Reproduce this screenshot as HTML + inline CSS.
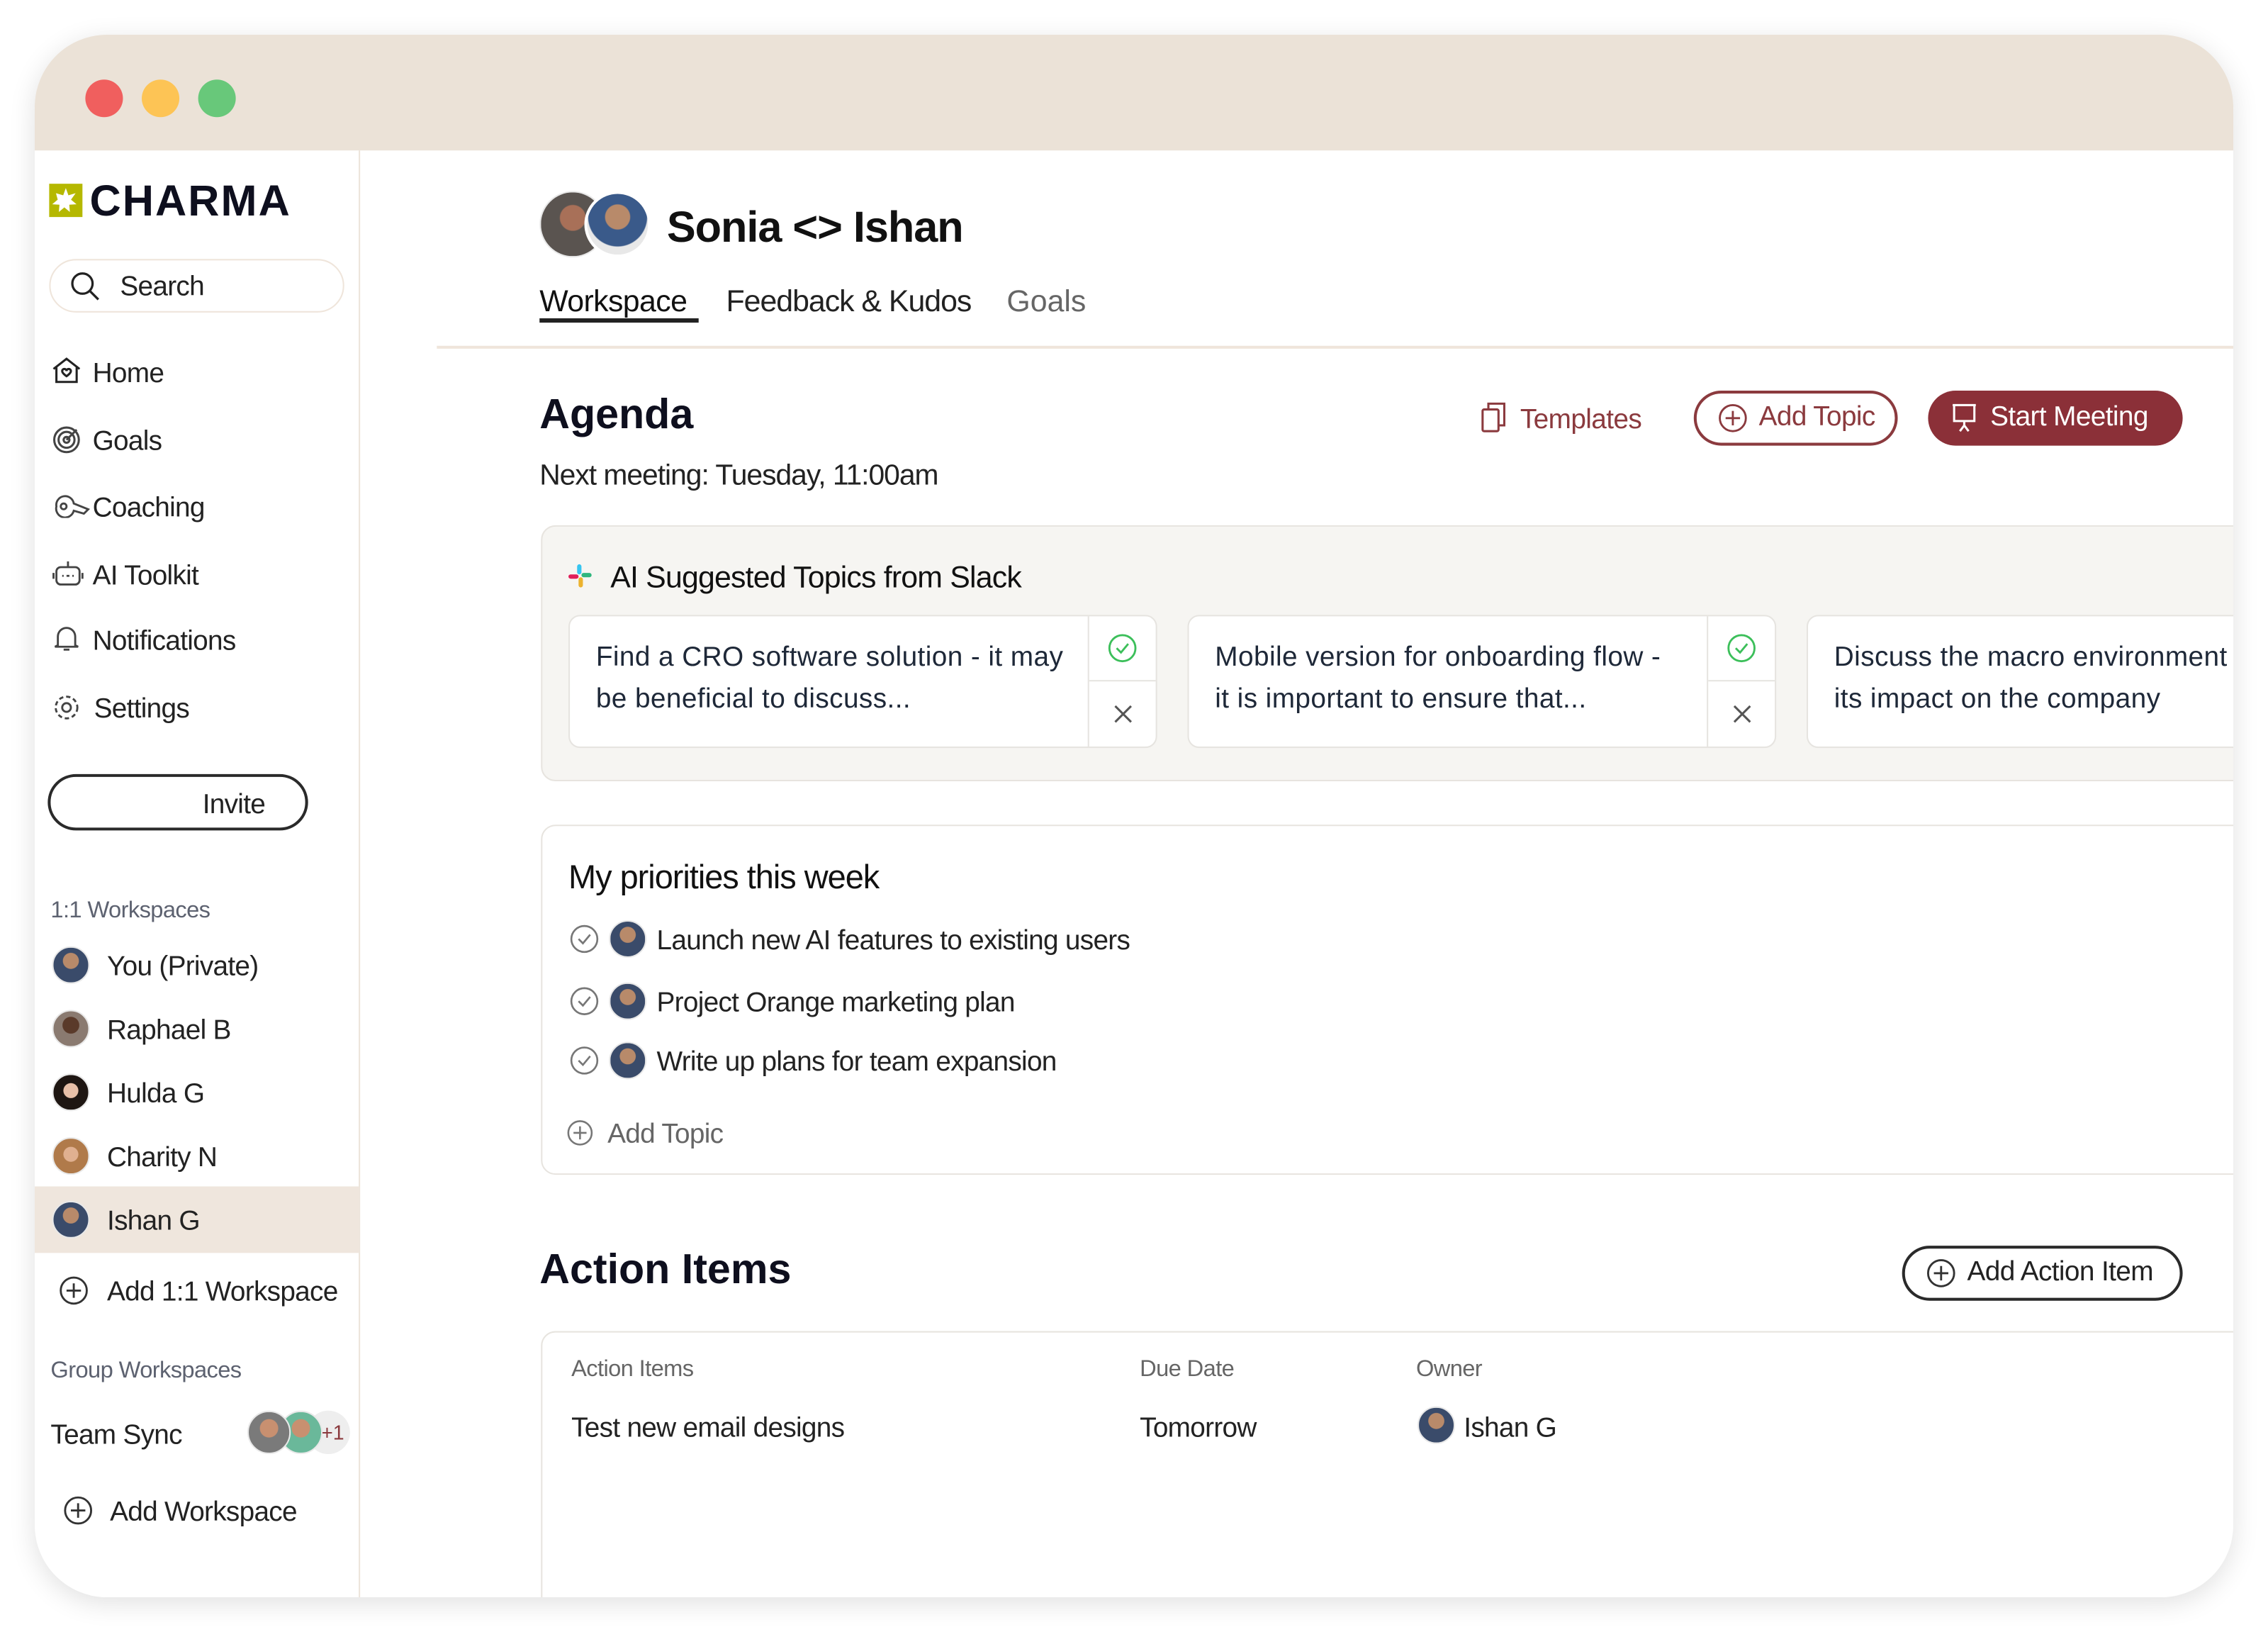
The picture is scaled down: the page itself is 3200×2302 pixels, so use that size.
<!DOCTYPE html>
<html><head><meta charset="utf-8"><style>
*{box-sizing:border-box;margin:0;padding:0}
html,body{width:3200px;height:2302px;overflow:hidden;background:#fff}
#stage{position:absolute;left:0;top:0;width:1568px;height:1128px;transform:scale(2.040816);transform-origin:0 0;font-family:"Liberation Sans",sans-serif;color:#1a1a24}
.win{position:absolute;left:24px;top:24px;width:1520px;height:1080px;border-radius:50px;overflow:hidden;background:#fff;box-shadow:0 4px 18px rgba(0,0,0,.12)}
.tb{position:absolute;left:0;top:0;width:100%;height:80px;background:#ebe2d7}
.dot{position:absolute;top:31px;width:26px;height:26px;border-radius:50%}
.side{position:absolute;left:0;top:80px;width:225px;height:1000px;border-right:1.5px solid #ece4da}
.a{position:absolute;white-space:nowrap}
.nav{font-size:19px;color:#222;letter-spacing:-.35px;margin-top:2px}
.av{position:absolute;width:26px;height:26px;border-radius:50%;background:radial-gradient(circle at 50% 38%,#b88a6a 0 28%,#3a4b6a 30% 100%);border:1.5px solid #e8e8e8}
.sec{font-size:16px;color:#5d6270;letter-spacing:-.3px;margin-top:2px}
.card{position:absolute;background:#fff;border:1.5px solid #e6e4e0;border-radius:8px}
.ct{position:absolute;left:18px;top:14px;font-size:19px;line-height:29px;color:#1e2838;letter-spacing:.2px}
.cd{position:absolute;top:0;width:47px;height:100%;border-left:1.5px solid #e6e4e0}
.btn{position:absolute;border-radius:20px;font-size:19px;display:flex;align-items:center;gap:8px;padding-left:15px;letter-spacing:-.3px}
</style></head><body><div id="stage">
<div class="win">
 <div class="tb"></div>
 <div class="dot" style="left:35px;background:#f05f5e"></div>
 <div class="dot" style="left:74px;background:#fdc455"></div>
 <div class="dot" style="left:113px;background:#68c87a"></div>
 <div class="side"></div>
 <div class="a" style="left:10px;top:103px;width:23px;height:23px;background:#b5b800"><svg width="23" height="23" viewBox="0 0 23 23"><path d="M11.5 3l1.8 5 5-1.5-3.2 4.5 3.8 3.2-5 .3.4 5-3.8-3.2-3.8 3.2.4-5-5-.3 3.8-3.2L4.7 6.5l5 1.5z" fill="#fff"/></svg></div>
 <div class="a" style="left:38px;top:99px;font-size:30px;font-weight:bold;letter-spacing:1px;color:#0e0f1e">CHARMA</div>
 <div class="a" style="left:10px;top:155px;width:204px;height:37px;border:1.5px solid #efe5db;border-radius:19px"></div>
 <svg class="a" style="left:24px;top:163px" width="22" height="22" viewBox="0 0 22 22" fill="none" stroke="#222" stroke-width="1.6"><circle cx="9" cy="9" r="7"/><path d="M14 14l6 6"/></svg>
 <div class="a nav" style="left:59px;top:162px">Search</div>
 <svg class="a" style="left:12px;top:223px" width="20" height="18" viewBox="0 0 20 18" fill="none" stroke="#222" stroke-width="1.5"><path d="M1 8L10 1l9 7M3 7v10h14V7M7 9.5c0-2 3-2 3 0 0-2 3-2 3 0 0 1.5-3 3.5-3 3.5S7 11 7 9.5z"/></svg>
 <div class="a nav" style="left:40px;top:222px">Home</div>
 <svg class="a" style="left:12px;top:270px" width="20" height="20" viewBox="0 0 20 20" fill="none" stroke="#444" stroke-width="1.5"><circle cx="10" cy="10" r="8.5"/><circle cx="10" cy="10" r="5.5"/><circle cx="10" cy="10" r="2"/><path d="M10 10l7-7"/></svg>
 <div class="a nav" style="left:40px;top:269px">Goals</div>
 <svg class="a" style="left:13px;top:318px" width="26" height="16" viewBox="0 0 26 16" fill="none" stroke="#444" stroke-width="1.4"><path d="M2 8a6 6 0 0 1 12-2l10 4-3 3-7-2a6 6 0 0 1-12-3z"/><circle cx="7" cy="8" r="2"/></svg>
 <div class="a nav" style="left:40px;top:315px">Coaching</div>
 <svg class="a" style="left:12px;top:362px" width="22" height="20" viewBox="0 0 22 20" fill="none" stroke="#444" stroke-width="1.4"><rect x="3" y="6" width="16" height="12" rx="3"/><path d="M11 6V2M1 10v4M21 10v4M7 12h1M10 12h2M14 12h1"/></svg>
 <div class="a nav" style="left:40px;top:362px">AI Toolkit</div>
 <svg class="a" style="left:13px;top:407px" width="18" height="20" viewBox="0 0 18 20" fill="none" stroke="#444" stroke-width="1.4"><path d="M3 15V9a6 6 0 0 1 12 0v6l2 1H1zM7 18h4"/></svg>
 <div class="a nav" style="left:40px;top:407px">Notifications</div>
 <svg class="a" style="left:12px;top:455px" width="20" height="20" viewBox="0 0 20 20" fill="none" stroke="#444" stroke-width="1.4"><circle cx="10" cy="10" r="3"/><circle cx="10" cy="10" r="7.5" stroke-dasharray="3 2"/></svg>
 <div class="a nav" style="left:41px;top:454px">Settings</div>
 <div class="a" style="left:9px;top:511px;width:180px;height:39px;border:2px solid #2a2a2a;border-radius:20px"></div>
 <div class="a nav" style="left:116px;top:520px">Invite</div>
 <div class="a sec" style="left:11px;top:595px">1:1 Workspaces</div>
 <div class="av" style="left:12px;top:630px"></div><div class="a nav" style="left:50px;top:632px">You (Private)</div>
 <div class="av" style="left:12px;top:674px;background:radial-gradient(circle at 50% 40%,#5a3a2a 0 30%,#8a7a70 32%)"></div><div class="a nav" style="left:50px;top:676px">Raphael B</div>
 <div class="av" style="left:12px;top:718px;background:radial-gradient(circle at 50% 45%,#e8c0a8 0 28%,#1e1612 30%)"></div><div class="a nav" style="left:50px;top:720px">Hulda G</div>
 <div class="av" style="left:12px;top:762px;background:radial-gradient(circle at 50% 45%,#e0b090 0 28%,#b07a4a 30%)"></div><div class="a nav" style="left:50px;top:764px">Charity N</div>
 <div class="a" style="left:0;top:796px;width:224px;height:46px;background:#efe6dd"></div>
 <div class="av" style="left:12px;top:806px"></div><div class="a nav" style="left:50px;top:808px">Ishan G</div>
 <svg class="a" style="left:17px;top:858px" width="20" height="20" viewBox="0 0 20 20" fill="none" stroke="#333" stroke-width="1.4"><circle cx="10" cy="10" r="9"/><path d="M10 5v10M5 10h10"/></svg>
 <div class="a nav" style="left:50px;top:857px">Add 1:1 Workspace</div>
 <div class="a sec" style="left:11px;top:913px">Group Workspaces</div>
 <div class="a nav" style="left:11px;top:956px">Team Sync</div>
 <div class="a" style="left:188px;top:951px;width:30px;height:30px;border-radius:50%;background:#eee;font-size:14px;color:#8b3a3e;line-height:30px;text-align:right;padding-right:4px">+1</div>
 <div class="av" style="left:169px;top:951px;width:30px;height:30px;background:radial-gradient(circle at 50% 40%,#c89070 0 28%,#6ab89a 30%)"></div>
 <div class="av" style="left:147px;top:951px;width:30px;height:30px;background:radial-gradient(circle at 50% 40%,#c89070 0 28%,#7a7a7a 30%)"></div>
 <svg class="a" style="left:20px;top:1010px" width="20" height="20" viewBox="0 0 20 20" fill="none" stroke="#333" stroke-width="1.4"><circle cx="10" cy="10" r="9"/><path d="M10 5v10M5 10h10"/></svg>
 <div class="a nav" style="left:52px;top:1009px">Add Workspace</div>

 <div class="av" style="left:349px;top:108px;width:46px;height:46px;background:radial-gradient(circle at 50% 40%,#a87058 0 25%,#5a5450 27%)"></div>
 <div class="av" style="left:380px;top:108px;width:46px;height:46px;border:2px solid #fff;background:radial-gradient(circle at 50% 38%,#b88a6a 0 25%,#3a5a8a 27% 60%,#e8e8e8 62%)"></div>
 <div class="a" style="left:437px;top:117px;font-size:30px;font-weight:bold;color:#111;letter-spacing:-.5px">Sonia &lt;&gt; Ishan</div>
 <div class="a" style="left:349px;top:173px;font-size:21px;color:#111;letter-spacing:-.3px">Workspace</div>
 <div class="a" style="left:349px;top:196px;width:110px;height:3px;background:#222"></div>
 <div class="a" style="left:478px;top:173px;font-size:21px;color:#222;letter-spacing:-.5px">Feedback &amp; Kudos</div>
 <div class="a" style="left:672px;top:173px;font-size:21px;color:#666">Goals</div>
 <div class="a" style="left:278px;top:215px;width:1250px;height:1.5px;background:#efe5db"></div>
 <div class="a" style="left:349px;top:247px;font-size:29px;font-weight:bold;color:#0e0f1e">Agenda</div>
 <div class="a" style="left:349px;top:294px;font-size:20px;color:#222;letter-spacing:-.5px">Next meeting: Tuesday, 11:00am</div>
 <svg class="a" style="left:1000px;top:254px" width="18" height="22" viewBox="0 0 18 22" fill="none" stroke="#8b3a3e" stroke-width="1.5"><rect x="1" y="5" width="11" height="15" rx="1"/><path d="M5 5V1h11v15h-4"/></svg>
 <div class="a" style="left:1027px;top:256px;font-size:19px;color:#8b3a3e;letter-spacing:-.3px">Templates</div>
 <div class="btn" style="left:1147px;top:246px;width:141px;height:38px;border:2px solid #8b3a3e;color:#8b3a3e"><svg width="20" height="20" viewBox="0 0 20 20" fill="none" stroke="#8b3a3e" stroke-width="1.4"><circle cx="10" cy="10" r="9"/><path d="M10 5v10M5 10h10"/></svg>Add Topic</div>
 <div class="btn" style="left:1309px;top:246px;width:176px;height:38px;background:#8b3038;color:#fff"><svg width="20" height="22" viewBox="0 0 20 22" fill="none" stroke="#fff" stroke-width="1.5"><path d="M2 2h16M3 2v11h14V2M10 13v3l-3 4M10 16l3 4"/></svg>Start Meeting</div>

 <div class="a" style="left:350px;top:339px;width:1250px;height:177px;background:#f6f5f2;border:1.5px solid #e7e4df;border-radius:10px"></div>
 <svg class="a" style="left:368px;top:365px" width="18" height="18" viewBox="0 0 18 18"><rect x="7" y="1" width="3" height="7" rx="1.5" fill="#36c5f0"/><rect x="10" y="7" width="7" height="3" rx="1.5" fill="#2eb67d"/><rect x="8" y="10" width="3" height="7" rx="1.5" fill="#ecb22e"/><rect x="1" y="8" width="7" height="3" rx="1.5" fill="#e01e5a"/></svg>
 <div class="a" style="left:398px;top:364px;font-size:21px;color:#111;letter-spacing:-.4px">AI Suggested Topics from Slack</div>
 <div class="card" style="left:369px;top:401px;width:407px;height:92px"><div class="ct">Find a CRO software solution - it may<br>be beneficial to discuss...</div><div class="cd" style="right:0"><div style="height:50%;border-bottom:1.5px solid #e6e4e0"></div></div></div>
 <div class="card" style="left:797px;top:401px;width:407px;height:92px"><div class="ct">Mobile version for onboarding flow -<br>it is important to ensure that...</div><div class="cd" style="right:0"><div style="height:50%;border-bottom:1.5px solid #e6e4e0"></div></div></div>
 <div class="card" style="left:1225px;top:401px;width:407px;height:92px"><div class="ct">Discuss the macro environment and<br>its impact on the company</div></div>
 <svg class="a" style="left:742px;top:414px" width="20" height="20" viewBox="0 0 20 20" fill="none" stroke="#3cbf5a" stroke-width="1.4"><circle cx="10" cy="10" r="9"/><path d="M6 10l3 3 5-6"/></svg>
 <svg class="a" style="left:1170px;top:414px" width="20" height="20" viewBox="0 0 20 20" fill="none" stroke="#3cbf5a" stroke-width="1.4"><circle cx="10" cy="10" r="9"/><path d="M6 10l3 3 5-6"/></svg>
 <svg class="a" style="left:746px;top:463px" width="13" height="13" viewBox="0 0 13 13" stroke="#555" stroke-width="1.5"><path d="M1 1l11 11M12 1L1 12"/></svg>
 <svg class="a" style="left:1174px;top:463px" width="13" height="13" viewBox="0 0 13 13" stroke="#555" stroke-width="1.5"><path d="M1 1l11 11M12 1L1 12"/></svg>

 <div class="a" style="left:350px;top:546px;width:1250px;height:242px;border:1.5px solid #e7e4df;border-radius:10px"></div>
 <div class="a" style="left:369px;top:569px;font-size:23px;color:#111;letter-spacing:-.5px">My priorities this week</div>
 <svg class="a" style="left:370px;top:615px" width="20" height="20" viewBox="0 0 20 20" fill="none" stroke="#777" stroke-width="1.3"><circle cx="10" cy="10" r="9"/><path d="M6 10l3 3 5-6"/></svg>
 <div class="av" style="left:397px;top:612px"></div><div class="a nav" style="left:430px;top:614px">Launch new AI features to existing users</div>
 <svg class="a" style="left:370px;top:658px" width="20" height="20" viewBox="0 0 20 20" fill="none" stroke="#777" stroke-width="1.3"><circle cx="10" cy="10" r="9"/><path d="M6 10l3 3 5-6"/></svg>
 <div class="av" style="left:397px;top:655px"></div><div class="a nav" style="left:430px;top:657px">Project Orange marketing plan</div>
 <svg class="a" style="left:370px;top:699px" width="20" height="20" viewBox="0 0 20 20" fill="none" stroke="#777" stroke-width="1.3"><circle cx="10" cy="10" r="9"/><path d="M6 10l3 3 5-6"/></svg>
 <div class="av" style="left:397px;top:696px"></div><div class="a nav" style="left:430px;top:698px">Write up plans for team expansion</div>
 <svg class="a" style="left:368px;top:750px" width="18" height="18" viewBox="0 0 20 20" fill="none" stroke="#777" stroke-width="1.4"><circle cx="10" cy="10" r="9"/><path d="M10 5v10M5 10h10"/></svg>
 <div class="a nav" style="left:396px;top:748px;color:#666">Add Topic</div>

 <div class="a" style="left:349px;top:838px;font-size:29px;font-weight:bold;color:#0e0f1e">Action Items</div>
 <div class="btn" style="left:1291px;top:837px;width:194px;height:38px;border:2px solid #2a2a2a;color:#222"><svg width="20" height="20" viewBox="0 0 20 20" fill="none" stroke="#333" stroke-width="1.4"><circle cx="10" cy="10" r="9"/><path d="M10 5v10M5 10h10"/></svg>Add Action Item</div>
 <div class="a" style="left:350px;top:896px;width:1250px;height:250px;border:1.5px solid #e7e4df;border-radius:10px"></div>
 <div class="a sec" style="left:371px;top:912px;color:#666">Action Items</div>
 <div class="a sec" style="left:764px;top:912px;color:#666">Due Date</div>
 <div class="a sec" style="left:955px;top:912px;color:#666">Owner</div>
 <div class="a nav" style="left:371px;top:951px">Test new email designs</div>
 <div class="a nav" style="left:764px;top:951px">Tomorrow</div>
 <div class="av" style="left:956px;top:948px"></div><div class="a nav" style="left:988px;top:951px">Ishan G</div>
</div>
</div></body></html>
